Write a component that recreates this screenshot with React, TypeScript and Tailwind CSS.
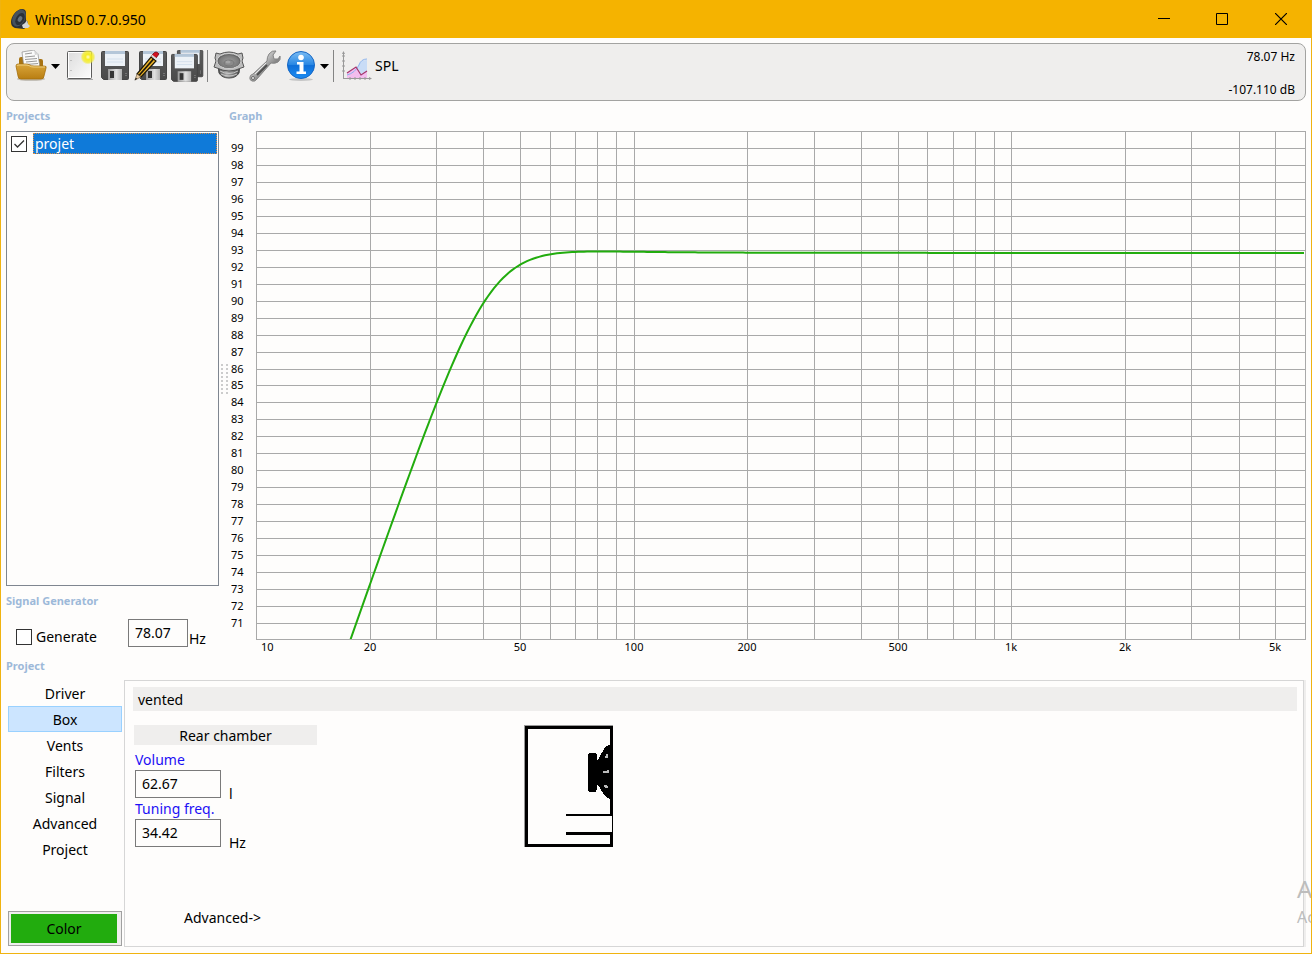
import { useState } from "react";

const tabs = ["Driver", "Box", "Vents", "Filters", "Signal", "Advanced", "Project"]

const freqLines = [
  20, 30, 40, 50, 60, 70, 80, 90, 100, 200, 300, 400, 500, 600, 700, 800, 900,
  1000, 2000, 3000, 4000, 5000,
]

const freqLabels = [
  { hz: 20, label: "20" },
  { hz: 50, label: "50" },
  { hz: 100, label: "100" },
  { hz: 200, label: "200" },
  { hz: 500, label: "500" },
  { hz: 1000, label: "1k" },
  { hz: 2000, label: "2k" },
  { hz: 5000, label: "5k" },
]

const dbLines = Array.from({ length: 29 }, (_, i) => 99 - i)

const plot = { left: 27, top: 1, right: 1076, bottom: 509 }

const toX = (hz: number) => plot.left + 377.6 * Math.log10(hz / 10)
const toY = (db: number) => plot.top + (100 - db) * 16.933

// level of the vented box in dB, rolls off below 40 Hz
const level = (hz: number) => {
  const s = (40 / hz) ** 2
  return 92.86 - 10 * Math.log10(1 - 0.08 * s - 0.307 * s ** 2 + 1.2875 * s ** 3 + 0.0395 * s ** 4)
}

const curvePath = () => {
  const points: string[] = []
  for (let x = plot.left + 90; x <= plot.right; x += 3) {
    const hz = 10 * 10 ** ((x - plot.left) / 377.6)
    points.push(`${x + 1} ${(toY(level(hz)) + 1).toFixed(2)}`)
  }
  return `M${points.join("L")}`
}

const Graph = () => (
  <svg viewBox="0 0 1077 528" className="w-full block" role="img" aria-label="SPL graph">
    <clipPath id="plot">
      <rect x={plot.left} y={plot.top} width={plot.right - plot.left + 1} height={plot.bottom - plot.top} />
    </clipPath>
    <g stroke="#a9a9a9" shapeRendering="crispEdges" fill="none">
      <rect x={plot.left + 0.5} y={plot.top + 0.5} width={plot.right - plot.left} height={plot.bottom - plot.top} />
      {dbLines.map((db) => {
        const y = Math.ceil(toY(db)) + 0.5
        return <path key={db} d={`M${plot.left} ${y}H${plot.right}`} />
      })}
      {freqLines.map((hz) => {
        const x = Math.round(toX(hz)) + 0.5
        return <path key={hz} d={`M${x} ${plot.top}V${plot.bottom}`} />
      })}
    </g>
    <path d={curvePath()} fill="none" stroke="#22ac0e" strokeWidth="2" clipPath="url(#plot)" />
    <g className="text-[11px]" fill="#000">
      {dbLines.map((db) => (
        <text key={db} x="2" y={Math.ceil(toY(db)) + 4}>{db}</text>
      ))}
      <text x="32" y="521">10</text>
      {freqLabels.map(({ hz, label }) => (
        <text key={hz} x={Math.round(toX(hz))} y="521" textAnchor="middle">{label}</text>
      ))}
    </g>
  </svg>
)

const AppLogo = () => (
  <svg width="20" height="22" viewBox="0 0 20 22">
    <path d="M12 1C7 1 1 8 1 14c0 3 1 5 4 6l9 1 3-3 1-4-2-2V5q0-4-4-4z" fill="#2b3138" />
    <ellipse cx="9" cy="10" rx="6" ry="9" transform="rotate(30 9 10)" fill="#46525d" />
    <ellipse cx="10" cy="11" rx="4" ry="6.500" transform="rotate(30 10 11)" fill="#2a3138" />
    <ellipse cx="10" cy="11" rx="2" ry="3" transform="rotate(30 10 11)" fill="#67747f" />
    <path d="m12 17 3-2 2-3 1 4 2 2-2 2h-5z" fill="#d3d6d6" />
  </svg>
)

const OpenIcon = () => (
  <svg width="32" height="32" viewBox="0 0 32 32">
    <defs>
      <linearGradient id="folder" x1="0" y1="0" x2="0" y2="1">
        <stop offset="0" stopColor="#d9a53a" />
        <stop offset="1" stopColor="#b97e12" />
      </linearGradient>
    </defs>
    <ellipse cx="16" cy="29" rx="14" ry="2" fill="#c4c0b8" />
    <path d="M4 9q0-2 2-2h4l2 2h14q2 0 2 2v15H4z" fill="#a87413" />
    <path d="m7 2 12-2 4 4 2 14H9z" fill="#fafafa" stroke="#8d8d8d" strokeWidth=".7" />
    <path d="m19 0 1 5 4-1z" fill="#d5d5d5" />
    <path d="m10 4 7-1M10 7l10-1M10 9.500l12-1M11 12l11-1M11 14.500l12-1" stroke="#999" />
    <path d="M1 16q0-2 2-2h8q2 0 4 1 1 1 4 1h10q3 0 2 2l-2 8q0 3-3 3H6q-3 0-3-3z" fill="url(#folder)" stroke="#a46f0c" strokeWidth=".8" />
    <path d="M2 16q0-1 2-1h7q2 0 4 1 1 1 4 1h11" fill="none" stroke="#f2d588" strokeWidth=".9" />
  </svg>
)

const NewIcon = () => (
  <svg width="30" height="32" viewBox="0 0 30 32">
    <defs>
      <linearGradient id="sheet" x1="0" y1="0" x2="1" y2="1">
        <stop offset="0" stopColor="#dedede" />
        <stop offset="1" stopColor="#fafafa" />
      </linearGradient>
      <radialGradient id="glow">
        <stop offset="0" stopColor="#fffbd0" />
        <stop offset=".35" stopColor="#f6ee22" />
        <stop offset=".75" stopColor="#f3ec30" stopOpacity=".75" />
        <stop offset="1" stopColor="#f3ec30" stopOpacity="0" />
      </radialGradient>
    </defs>
    <path d="M1 29h26v1H1z" fill="#aaa" />
    <rect x="1.500" y="1.500" width="24" height="27" rx="1" fill="#fff" stroke="#5c5c5c" />
    <rect x="3" y="3" width="21" height="24" fill="url(#sheet)" />
    <path d="M5 10v1M5 20v1" stroke="#999" />
    <circle cx="22" cy="7" r="7.500" fill="url(#glow)" />
  </svg>
)

const Floppy = () => (
  <>
    <path d="M1.500 2.500q0-1 1-1h25q1 0 1 1v26q0 1-1 1H3.500l-2-2z" fill="url(#floppy)" stroke="#454545" />
    <path d="M5 1h20v15H5z" fill="#edf2f7" />
    <path d="M5 1h20v3H5z" fill="#b4c6d8" />
    <path d="M7 9h16M7 12h16" stroke="#d5e0ec" />
    <path d="M8 19h14v11H8z" fill="url(#shutter)" />
    <path d="M10 21h4v7h-4z" fill="#343434" />
    <path d="M26 23v4" stroke="#999" strokeDasharray="1 1" />
  </>
)

const FloppyDefs = () => (
  <defs>
    <linearGradient id="floppy" x1="0" y1="0" x2="0" y2="1">
      <stop offset="0" stopColor="#5c5c5c" />
      <stop offset="1" stopColor="#4a4a4a" />
    </linearGradient>
    <linearGradient id="shutter" x1="0" y1="0" x2="1" y2="0">
      <stop offset="0" stopColor="#9b9b9b" />
      <stop offset=".6" stopColor="#e0e0e0" />
      <stop offset="1" stopColor="#b2b2b2" />
    </linearGradient>
  </defs>
)

const SaveIcon = () => (
  <svg width="30" height="32" viewBox="0 0 30 32">
    <FloppyDefs />
    <Floppy />
  </svg>
)

const SaveAsIcon = () => (
  <svg width="33" height="32" viewBox="0 0 33 32">
    <g transform="translate(4 0)"><Floppy /></g>
    <path d="M19 4q3-4 6 0l-3 4-5-2z" fill="#d01020" stroke="#6e0a12" strokeWidth=".8" />
    <path d="m17 7 5 4L7 27l-4-3z" fill="#f0b628" stroke="#1d1708" strokeWidth="1.200" />
    <path d="M19.500 9 5 25.500" stroke="#1d1708" strokeWidth="1.800" />
    <path d="m17 6 5 4 1-1.500-5-4z" fill="#ddd" />
    <path d="m3 24 4 3-6 3z" fill="#e6c9a0" stroke="#6a5638" strokeWidth=".6" />
    <path d="m1.800 27.800 1.500 1L.5 30.500z" fill="#222" />
  </svg>
)

const SaveAllIcon = () => (
  <svg width="33" height="33" viewBox="0 0 33 33">
    <g transform="translate(5 -1) scale(.94)"><Floppy /></g>
    <g transform="translate(-1 3) scale(.96)"><Floppy /></g>
  </svg>
)

const SpeakerIcon = () => (
  <svg width="32" height="30" viewBox="0 0 32 30">
    <defs>
      <linearGradient id="basket" x1="0" y1="0" x2="1" y2="0">
        <stop offset="0" stopColor="#4b4b4b" />
        <stop offset=".4" stopColor="#aaa" />
        <stop offset="1" stopColor="#484848" />
      </linearGradient>
      <radialGradient id="cone">
        <stop offset="0" stopColor="#a0a0a0" />
        <stop offset="1" stopColor="#777" />
      </radialGradient>
    </defs>
    <path d="M5 14h22l-1 8q-3 5-10 5T6 22z" fill="url(#basket)" stroke="#484848" />
    <path d="M7 20q9 5 18 0M8 23q8 4 16 0" fill="none" stroke="#ccc" strokeWidth=".9" />
    <path d="M3 2l4 1q9-4 18 0l4-1 1 5-1 3 2 6-3 1q-12 6-24 0l-3-1 2-6-1-3z" fill="#bdbdbd" stroke="#555" />
    <ellipse cx="16" cy="10" rx="12" ry="7.500" fill="#666" stroke="#ddd" strokeWidth=".8" />
    <ellipse cx="16" cy="10.500" rx="10.500" ry="6.500" fill="url(#cone)" />
    <ellipse cx="16" cy="12" rx="5" ry="3" fill="#8b8b8b" stroke="#707070" strokeWidth=".7" />
    <ellipse cx="15" cy="11" rx="2.500" ry="1.500" fill="#a5a5a5" />
  </svg>
)

const WrenchIcon = () => (
  <svg width="32" height="33" viewBox="0 0 32 33">
    <defs>
      <linearGradient id="steel" x1="0" y1="0" x2="1" y2="1">
        <stop offset=".2" stopColor="#f1f1f1" />
        <stop offset=".6" stopColor="#888" />
      </linearGradient>
    </defs>
    <path
      d="M20 4q3-4 7-3l-3 4 1 4 4 0 2-3q1 4-2 6-3 2-7 1L8 29q-2 3-5 2t-2-4q0-2 3-3L18 11q0-4 2-7z"
      fill="url(#steel)"
      stroke="#858585"
    />
    <path d="M18 15 8 25" stroke="#4f4f4f" strokeWidth="2" />
    <path d="M17 13 6 24" stroke="#eee" strokeWidth=".9" />
    <circle cx="4" cy="28" r="1.500" fill="#eee" stroke="#555" strokeWidth=".8" />
  </svg>
)

const InfoIcon = () => (
  <svg width="30" height="32" viewBox="0 0 30 32">
    <defs>
      <linearGradient id="info" x1="0" y1="0" x2="0" y2="1">
        <stop offset="0" stopColor="#7bbcf3" />
        <stop offset=".48" stopColor="#2a88e4" />
        <stop offset=".52" stopColor="#0f6fd9" />
        <stop offset="1" stopColor="#1b8cf2" />
      </linearGradient>
    </defs>
    <ellipse cx="15" cy="29.500" rx="12" ry="1.500" fill="#c5c5c5" />
    <circle cx="15" cy="15" r="13.500" fill="url(#info)" stroke="#1767c4" />
    <circle cx="15" cy="7.500" r="2.800" fill="#fff" />
    <path d="M11 12h6.500v9.500H20V24h-9.500v-2.500h3v-7H11z" fill="#fff" />
  </svg>
)

const ChartIcon = () => (
  <svg width="30" height="30" viewBox="0 0 30 30">
    <path d="M5 25q8 0 12-12 2-4 8-4v16z" fill="#c9dcf6" />
    <path d="M5 25v-3l9-6 5 8 6-4v7H5z" fill="#f3bdee" />
    <path d="M5 24q8-2 12-10 2-6 8-6" fill="none" stroke="#8cb4ee" />
    <path d="m5 22 9-6 5 8 6-4" fill="none" stroke="#a4356a" strokeWidth="1.200" />
    <path d="M1.500 2v26M1 27.500h27M0 5h3M0 10h3M0 15h3M0 20h3M8 26v3M13 26v3M18 26v3M23 26v3" stroke="#999" fill="none" />
    <path d="m1.500 0 1.500 3H0zM30 27.500l-3-1.500v3z" fill="#999" />
  </svg>
)

const Caret = () => (
  <svg width="9" height="5" viewBox="0 0 9 5"><path d="M0 0h9L4.500 5z" fill="#000" /></svg>
)

const BoxDrawing = () => (
  <svg width="90" height="122" viewBox="0 0 90 122" shapeRendering="crispEdges" aria-label="vented box">
    <path d="M.5 122V.5H89" fill="none" stroke="#999" />
    <path d="M1 1h88v121H1zM4 4v115h82v-9H42v-3h46V91H42v-2h44V4z" fill="#000" fillRule="evenodd" />
    <path d="M64 31q0-3 3-3h3q3 0 3 3v4h1l7-13 6-3v56l-6-4-7-11h-1v3q0 4-3 4h-3q-3 0-3-3z" fill="#000" />
    <path d="M81 32h2v-2h1M79 47h5v-2M80 61h2v1h2" stroke="#bbb" strokeWidth="1.500" fill="none" />
  </svg>
)

const Heading = ({ children }: { children: string }) => (
  <h2 className="text-[11px] leading-4 font-bold text-[#9db9d9]">{children}</h2>
)

type FieldProps = {
  id: string
  label: string
  value: string
  unit: string
}

const Field = ({ id, label, value, unit }: FieldProps) => (
  <div>
    <label htmlFor={id} className="block leading-5 text-[#1c10f5]">{label}</label>
    <div className="flex items-end gap-2">
      <input id={id} defaultValue={value} className="w-[86px] h-7 px-1.5 pb-0.5 border border-[#7a7a7a] bg-[#fefdfc]" />
      <span className="h-4 leading-6">{unit}</span>
    </div>
  </div>
)

const TitleBar = () => (
  <header className="flex items-center justify-between h-[38px] -mx-px pl-2.5 bg-[#f5b300]">
    <div className="flex items-center gap-[5px]">
      <AppLogo />
      <h1 className="pt-px">WinISD 0.7.0.950</h1>
    </div>
    <div className="flex h-full pr-px">
      <button aria-label="Minimize" className="w-[58px] flex items-center justify-center">
        <svg width="12" height="12" viewBox="0 0 12 12"><path d="M0 5.500h12" stroke="#000" /></svg>
      </button>
      <button aria-label="Maximize" className="w-[58px] flex items-center justify-center">
        <svg width="12" height="12" viewBox="0 0 12 12"><path d="M.5.5h11v11H.5z" fill="none" stroke="#000" /></svg>
      </button>
      <button aria-label="Close" className="w-[60px] flex items-center justify-center">
        <svg width="12" height="12" viewBox="0 0 12 12"><path d="m0 0 12 12M12 0 0 12" stroke="#000" strokeWidth="1.200" /></svg>
      </button>
    </div>
  </header>
)

const Toolbar = () => (
  <div className="flex justify-between h-[58px] mt-[5px] mx-[5px] pl-2 pr-2.5 rounded-lg border border-[#a3a3a1] bg-[#efeeed]">
    <div className="flex items-center h-11 gap-[3px]">
      <button aria-label="Open"><OpenIcon /></button>
      <button aria-label="Open recent" className="w-[11px] flex justify-center"><Caret /></button>
      <button aria-label="New" className="ml-0.5"><NewIcon /></button>
      <button aria-label="Save" className="ml-px"><SaveIcon /></button>
      <button aria-label="Save as" className="ml-px"><SaveAsIcon /></button>
      <button aria-label="Save all" className="ml-px"><SaveAllIcon /></button>
      <span className="w-px h-8 bg-[#848484]" />
      <button aria-label="Drivers" className="ml-0.5"><SpeakerIcon /></button>
      <button aria-label="Options" className="ml-px"><WrenchIcon /></button>
      <button aria-label="About" className="ml-0.5"><InfoIcon /></button>
      <button aria-label="Help menu" className="w-[11px] flex justify-center"><Caret /></button>
      <span className="w-px h-8 bg-[#848484]" />
      <button className="flex items-center gap-[3px] ml-[5px]">
        <ChartIcon />
        SPL
      </button>
    </div>
    <div className="flex flex-col justify-between pt-[5px] pb-0.5 text-xs text-right">
      <p>78.07 Hz</p>
      <p>-107.110 dB</p>
    </div>
  </div>
)

const App = () => {
  const [tab, setTab] = useState("Box")
  const [shown, setShown] = useState(true)

  return (
    <div className="relative flex flex-col min-h-screen overflow-hidden border-x border-b border-[#f0b310] bg-[#fefdfc] text-black text-sm font-['Noto_Sans','Open_Sans',sans-serif]">
      <TitleBar />
      <Toolbar />

      <div className="flex px-[5px] pt-[7px]">
        <div className="flex flex-col w-[213px] shrink-0">
          <Heading>Projects</Heading>
          <div className="grow mt-[7px] p-px border border-[#7f8690]">
            <div className="flex items-center gap-1.5 pl-[3px]">
              <span className="grid w-4 h-4">
                <input
                  id="projet"
                  type="checkbox"
                  checked={shown}
                  onChange={() => setShown(!shown)}
                  className="col-start-1 row-start-1 appearance-none w-4 h-4 border border-[#333] bg-white"
                />
                {shown && (
                  <svg width="16" height="16" viewBox="0 0 16 16" className="col-start-1 row-start-1 pointer-events-none">
                    <path d="m3.500 8 3 3L13 4.500" fill="none" stroke="#333" strokeWidth="1.300" />
                  </svg>
                )}
              </span>
              <label htmlFor="projet" className="grow h-[21px] leading-5 px-px text-white bg-[#0f7ad9] border border-dotted border-[#e08a3c]">projet</label>
            </div>
          </div>
          <div className="pt-[7px]">
            <Heading>Signal Generator</Heading>
            <div className="flex pl-2.5 pt-2.5 pb-[9px]">
              <label className="flex items-center gap-1 w-28 pt-1.5">
                <input type="checkbox" className="appearance-none w-4 h-4 border border-[#333] bg-white" />
                Generate
              </label>
              <input aria-label="Frequency" defaultValue="78.07" className="w-[60px] h-7 px-1.5 pb-0.5 border border-[#7a7a7a] bg-[#fefdfc]" />
              <span className="pl-px pt-2.5">Hz</span>
            </div>
          </div>
        </div>

        <div className="flex justify-center w-2.5 shrink-0 pt-64">
          <div className="grid grid-cols-2 content-start gap-x-[3px] gap-y-0.5">
            {Array.from({ length: 16 }, (_, i) => <span key={i} className="w-0.5 h-0.5 bg-[#ccc]" />)}
          </div>
        </div>

        <div className="grow min-w-0">
          <Heading>Graph</Heading>
          <div className="pt-[6px]">
            <Graph />
          </div>
        </div>
      </div>

      <div className="px-[5px]">
        <Heading>Project</Heading>
      </div>

      <div className="flex grow pl-[7px] pr-[5px] py-[6px]">
        <div className="flex flex-col justify-between w-[114px] shrink-0 pb-px">
          <nav className="flex flex-col">
            {tabs.map((name) => (
              <button
                key={name}
                onClick={() => setTab(name)}
                className={`h-[26px] pt-px border ${tab === name ? "bg-[#cce5ff] border-[#99d1ff]" : "border-transparent"}`}
              >
                {name}
              </button>
            ))}
          </nav>
          <button className="h-[35px] p-0.5 pr-1 border border-[#a0a0a0] bg-[#efeeed]">
            <span className="flex items-center justify-center h-full pt-px bg-[#22ac0e]">Color</span>
          </button>
        </div>

        <div className="grow ml-0.5 border-r-2 border-[#efeeed]">
          <div className="h-full border border-[#d6d6d6] pt-1.5 pl-2 pr-1.5">
            <p className="h-6 leading-[26px] px-[5px] bg-[#efeeed]">vented</p>
            <div className="flex pt-3.5">
              <div className="w-[391px] pl-px">
                <h3 className="w-[183px] h-5 leading-[22px] text-center bg-[#efeeed]">Rear chamber</h3>
                <div className="flex flex-col gap-px pt-[5px] pl-px">
                  <Field id="volume" label="Volume" value="62.67" unit="l" />
                  <Field id="tuning" label="Tuning freq." value="34.42" unit="Hz" />
                </div>
                <button className="block ml-[50px] mt-[61px]">Advanced-&gt;</button>
              </div>
              <BoxDrawing />
            </div>
          </div>
        </div>
      </div>

      {/* desktop watermark, cut off by the window edge */}
      <div className="absolute left-full bottom-6 -ml-3.5 whitespace-nowrap text-[#bdbdbd] pointer-events-none">
        <p className="text-2xl leading-8">A</p>
        <p className="text-base leading-6">Ac</p>
      </div>
    </div>
  );
}

export default App;
